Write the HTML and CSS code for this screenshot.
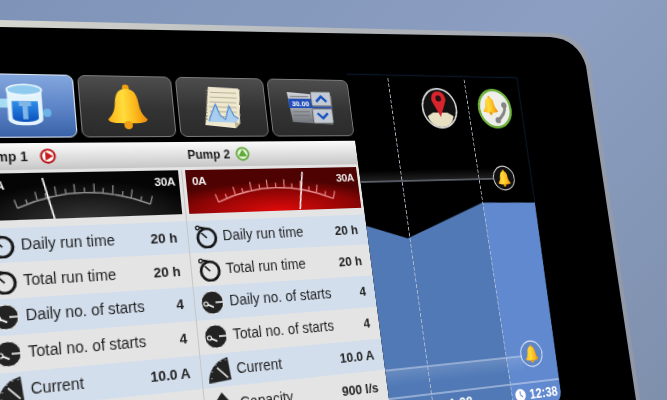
FILE: index.html
```html
<!doctype html>
<html lang="en">

<head>
    <meta charset="UTF-8">
    <title>Pump overview</title>
    <link rel="stylesheet" href="styles.css">
</head>

<body>
    <svg class="defs" width="0" height="0">
        <defs>
            <linearGradient id="gBell" x1="0" y1="0" x2="1" y2="0">
                <stop offset="0" stop-color="#ffb214" />
                <stop offset=".4" stop-color="#ffdc3c" />
                <stop offset=".7" stop-color="#fdb81c" />
                <stop offset="1" stop-color="#ea8a0c" />
            </linearGradient>
            <linearGradient id="gWater" x1="0" y1="0" x2="0" y2="1">
                <stop offset="0" stop-color="#2f8eea" />
                <stop offset="1" stop-color="#0a4fbc" />
            </linearGradient>
            <linearGradient id="gPanel" x1="0" y1="0" x2="0" y2="1">
                <stop offset="0" stop-color="#d0d4da" />
                <stop offset=".6" stop-color="#989ca2" />
                <stop offset="1" stop-color="#6c6f74" />
            </linearGradient>
            <symbol id="bell" viewBox="0 0 48 56">
                <circle cx="24" cy="5" r="4" fill="#f0a012" />
                <path fill="url(#gBell)" d="M24 6C14 6 11 14 10 24C9 34 6 38 1 43C1 47 8 48 24 48C40 48 47 47 47 43C42 38 39 34 38 24C37 14 34 6 24 6Z" />
                <circle cx="24" cy="50" r="5" fill="#f0a012" />
            </symbol>
            <symbol id="watch" viewBox="0 0 24 24">
                <circle cx="13" cy="14" r="9" fill="none" stroke="#161616" stroke-width="2.7" />
                <circle cx="4.500" cy="4" r="1.800" fill="none" stroke="#161616" stroke-width="1.300" />
                <path d="M6.500 3.500L12 4.800" fill="none" stroke="#161616" stroke-width="2" />
                <path d="M8 9L13 14" fill="none" stroke="#161616" stroke-width="1.500" />
            </symbol>
            <symbol id="starts" viewBox="0 0 24 24">
                <circle cx="12" cy="12" r="11" fill="#222" stroke="#f2f2f2" />
                <path d="M6 13L13 16.500M15 12H23" fill="none" stroke="#f2f2f2" stroke-width="1.600" />
                <circle cx="5.500" cy="13" r="2" fill="#222" stroke="#f2f2f2" stroke-width="1.200" />
            </symbol>
            <symbol id="current" viewBox="0 0 24 24">
                <path d="M23 21L1 23C1 12 8 3 21 0Z" fill="#222" />
                <path d="M10 9L20 19" stroke="#eee" stroke-width="1.500" />
                <path d="M4 19V18M5 13V12M9 7V6M14 4V3M19 3V2" stroke="#ccc" stroke-width="1" />
            </symbol>
            <symbol id="capacity" viewBox="0 0 24 24">
                <path d="M12 1L20 11H15V17H9V11H4Z" fill="#222" />
                <path d="M3 20H21M5 23H19" stroke="#222" stroke-width="2" />
            </symbol>
            <symbol id="dial" viewBox="0 0 186 42">
                <g transform="translate(16 2) scale(.83 1)">
                    <path fill="none" stroke="currentColor" stroke-width="1.500" d="M18 30Q93 4 168 30M18 30L15 22M29 26.500L27.500 22M40 23.500L38 15M50 21.300L49 16.500M61 19.400L60 10.500M72 18L71.500 13M82 17.300L81.700 8.500M93 17V12M104 17.300L104.300 8.500M114 18L114.500 13M125 19.400L126 10.500M136 21.300L137 16.500M146 23.500L148 15M157 26.500L158.500 22M168 30L171 22" />
                </g>
            </symbol>
        </defs>
    </svg>

    <div class="stage">
        <svg class="shell" viewBox="0 0 667 400">
            <defs>
                <linearGradient id="gEdge" x1="0" y1="0" x2="1" y2="0">
                    <stop offset="0" stop-color="#d6d6cf" />
                    <stop offset=".7" stop-color="#a9aeb6" />
                    <stop offset="1" stop-color="#9097a6" />
                </linearGradient>
            </defs>
            <path fill="url(#gEdge)" d="M-2 20L552 33Q582 35 590 64L640 400H-2Z" />
            <path fill="#000" d="M-2 27L550 37Q578 39 586 66L636 400H-2Z" />
        </svg>

        <div class="screen">
            <div class="main">
                <div class="toolbar">
                    <div class="tool tool-on">
                        <svg class="tool-icon tool-icon-tank" viewBox="0 0 64 56">
                            <rect x="0" y="19" width="14" height="11" rx="3" fill="#a6ddf2" />
                            <circle cx="56" cy="36" r="5" fill="#6cb4e8" />
                            <path d="M11 8V44C11 54 51 54 51 44V8Z" fill="#e4f4fc" />
                            <path d="M16 22V42C16 49 46 49 46 42V22Z" fill="url(#gWater)" />
                            <path d="M24 22H38V28H34V44H28V28H24Z" fill="#7fb6e6" />
                            <ellipse cx="31" cy="8" rx="20" ry="6.500" fill="#8fcbee" stroke="#eef9ff" stroke-width="2" />
                        </svg>
                    </div>
                    <div class="tool">
                        <svg class="tool-icon" viewBox="0 0 48 56"><use href="#bell" /></svg>
                    </div>
                    <div class="tool">
                        <svg class="tool-icon" viewBox="0 0 56 56">
                            <path d="M12 2L52 4L48 48L42 54L4 50Z" fill="#efe8cf" />
                            <path d="M14 9L47 10M13 15L47 16M12 21L46 22M11 27L46 28M11 33L45 34M10 39L44 40" stroke="#a8a28e" stroke-width="1" />
                            <path d="M10 6L6 46" stroke="#77715f" stroke-width="2" stroke-dasharray="1.500 2.500" />
                            <path d="M9 46L13 36L19 22L24 38L30 44L36 24L41 38L46 42L44 47Z" fill="#a9cdee" />
                            <path d="M9 45L13 36L19 24L24 38L30 43L36 26L41 38L47 42" fill="none" stroke="#4a86cf" stroke-width="1.400" />
                            <path d="M42 54L48 48L41 46Z" fill="#bdb592" />
                        </svg>
                    </div>
                    <div class="tool">
                        <svg class="tool-icon tool-icon-wide" viewBox="0 0 70 50">
                            <path d="M2 3L66 8L64 48L6 44Z" fill="url(#gPanel)" />
                            <rect x="3" y="12" width="34" height="13" fill="#2350b8" />
                            <text x="20" y="23" class="setpoint">30.00</text>
                            <path d="M6 9H32M8 30H32M8 35H32" stroke="#666" />
                            <path d="M36 24H66" stroke="#1b49b0" stroke-width="2" />
                            <rect x="36" y="2" width="29" height="20" rx="2" fill="#c4cad3" stroke="#444" />
                            <rect x="36" y="26" width="29" height="20" rx="2" fill="#c4cad3" stroke="#444" />
                            <path d="M43 16L50.500 9L58 16M43 32L50.500 39L58 32" fill="none" stroke="#1450c0" stroke-width="3.400" />
                        </svg>
                    </div>
                </div>

                <div class="table">
                    <section class="pump pump-first">
                        <header class="pump-head">
                            <span>Pump 1</span>
                            <svg class="state" viewBox="0 0 16 16">
                                <circle cx="8" cy="8" r="6.600" fill="#fff" stroke="#b81414" stroke-width="2" />
                                <path d="M5.500 3.500L13 8L5.500 12.500Z" fill="#c81818" />
                            </svg>
                        </header>
                        <div class="pump-body">
                            <div class="gauge gauge-off">
                                <svg viewBox="0 0 186 42"><use href="#dial" /><path d="M55 4L64 44" stroke="#fff" stroke-width="1.600" /></svg>
                                <span class="gauge-min">0A</span><span class="gauge-max">30A</span>
                            </div>
                            <div class="row"><svg class="row-icon"><use href="#watch" /></svg><span class="label">Daily run time</span><b>20 h</b></div>
                            <div class="row"><svg class="row-icon"><use href="#watch" /></svg><span class="label">Total run time</span><b>20 h</b></div>
                            <div class="row"><svg class="row-icon"><use href="#starts" /></svg><span class="label">Daily no. of starts</span><b>4</b></div>
                            <div class="row"><svg class="row-icon"><use href="#starts" /></svg><span class="label">Total no. of starts</span><b>4</b></div>
                            <div class="row"><svg class="row-icon"><use href="#current" /></svg><span class="label">Current</span><b>10.0 A</b></div>
                            <div class="row"><svg class="row-icon"><use href="#capacity" /></svg><span class="label">Capacity</span><b>900 l/s</b></div>
                        </div>
                    </section>
                    <section class="pump">
                        <header class="pump-head">
                            <span>Pump 2</span>
                            <svg class="state" viewBox="0 0 16 16">
                                <circle cx="8" cy="8" r="6.600" fill="#e8f4dc" stroke="#62a93c" stroke-width="2" />
                                <path d="M8 3L13 11H3Z" fill="#62a93c" />
                            </svg>
                        </header>
                        <div class="pump-body">
                            <div class="gauge gauge-on">
                                <svg viewBox="0 0 186 42"><use href="#dial" /><path d="M124 3L117 42" stroke="#fff" stroke-width="1.600" /></svg>
                                <span class="gauge-min">0A</span><span class="gauge-max">30A</span>
                            </div>
                            <div class="row"><svg class="row-icon"><use href="#watch" /></svg><span class="label">Daily run time</span><b>20 h</b></div>
                            <div class="row"><svg class="row-icon"><use href="#watch" /></svg><span class="label">Total run time</span><b>20 h</b></div>
                            <div class="row"><svg class="row-icon"><use href="#starts" /></svg><span class="label">Daily no. of starts</span><b>4</b></div>
                            <div class="row"><svg class="row-icon"><use href="#starts" /></svg><span class="label">Total no. of starts</span><b>4</b></div>
                            <div class="row"><svg class="row-icon"><use href="#current" /></svg><span class="label">Current</span><b>10.0 A</b></div>
                            <div class="row"><svg class="row-icon"><use href="#capacity" /></svg><span class="label">Capacity</span><b>900 l/s</b></div>
                        </div>
                    </section>
                </div>
            </div>

            <div class="chart">
                <svg class="plot" viewBox="0 0 222 362">
                    <defs>
                        <linearGradient id="gTop" x1="0" y1="0" x2="0" y2="1">
                            <stop offset="0" stop-color="#000" />
                            <stop offset="1" stop-color="#222" />
                        </linearGradient>
                        <linearGradient id="gLow" x1="0" y1="0" x2="0" y2="1">
                            <stop offset="0" stop-color="#fff" stop-opacity=".14" />
                            <stop offset="1" stop-color="#fff" stop-opacity="0" />
                        </linearGradient>
                    </defs>
                    <path d="M0 1.500H214L211 146" fill="none" stroke="#0b1626" stroke-width="1.500" />
                    <rect x="0" y="106" width="164" height="12" fill="url(#gTop)" />
                    <path fill="#5079b6" d="M0 164L46 179L143 144V362H0Z" />
                    <path fill="#6089cf" d="M143 144L211 146L205 352Q204 362 196 362H143Z" />
                    <rect x="0" y="311" width="164" height="16" fill="url(#gLow)" />
                    <path d="M0 118H164" stroke="#9aa3b4" stroke-width="1" />
                    <path d="M0 311H164" stroke="#c9d5ea" stroke-width="1" />
                    <path d="M0 339H205" stroke="#d6e0f2" stroke-width="1.200" />
                    <path class="dash" d="M48.500 5V362M143.500 5V362" />
                </svg>
                <div class="badge badge-map">
                    <svg viewBox="0 0 44 46">
                        <ellipse cx="22" cy="23" rx="21" ry="22" fill="#111" stroke="#d8d8d8" stroke-width="2" />
                        <path d="M6 32L13 28H31L38 32C36 40 30 44 22 44C14 44 8 40 6 32Z" fill="#e7e0c2" />
                        <path d="M22 33L13.500 15A8.800 8.800 0 1 1 30.500 15Z" fill="#d8242c" />
                        <circle cx="22" cy="12" r="3.500" fill="#2a1012" />
                    </svg>
                </div>
                <div class="badge badge-alarm">
                    <svg viewBox="0 0 44 46">
                        <ellipse cx="22" cy="23" rx="20.500" ry="21.500" fill="#eeeeea" stroke="#6fb33e" stroke-width="3" />
                        <svg x="6" y="8" width="20" height="23" viewBox="0 0 48 56"><use href="#bell" /></svg>
                        <path d="M35 19C36 26 30 33 23 37" fill="none" stroke="#858585" stroke-width="3.500" />
                        <circle cx="34.500" cy="19" r="3.500" fill="#858585" />
                        <circle cx="24" cy="36.500" r="3.500" fill="#858585" />
                    </svg>
                </div>
                <div class="badge badge-bell badge-bell-top">
                    <svg viewBox="0 0 26 26">
                        <circle cx="13" cy="13" r="12" fill="#111" stroke="#ddd" />
                        <svg x="5.500" y="4" width="15" height="18" viewBox="0 0 48 56"><use href="#bell" /></svg>
                    </svg>
                </div>
                <div class="badge badge-bell badge-bell-low">
                    <svg viewBox="0 0 26 26">
                        <circle cx="13" cy="13" r="12" fill="#5f86c8" stroke="#e4ebf6" />
                        <svg x="5.500" y="4" width="15" height="18" viewBox="0 0 48 56"><use href="#bell" /></svg>
                    </svg>
                </div>
                <div class="axis">
                    <span>1:38</span>
                    <span class="clock">
                        <svg viewBox="0 0 14 14">
                            <circle cx="7" cy="7" r="6.500" fill="#fff" />
                            <path d="M7 3V7L10 9" fill="none" stroke="#5f86c8" stroke-width="1.200" />
                        </svg>12:38
                    </span>
                </div>
            </div>
        </div>
    </div>
</body>

</html>
```

FILE: styles.css
```css
* {
    margin: 0;
    padding: 0;
    box-sizing: border-box;
}

body {
    font-family: "Liberation Sans", Arial, sans-serif;
    color: #222;
}

.defs {
    display: block;
    height: 0;
}

.stage {
    position: relative;
    width: 667px;
    height: 400px;
    overflow: hidden;
    background: linear-gradient(135deg, #7f93b8 0%, #8c9fc2 55%, #7f90ad 100%);
}

.shell {
    position: absolute;
    left: 0;
    top: 0;
    width: 667px;
    height: 400px;
}

/* flat tablet screen, the matrix lays it into the photo */
.screen {
    position: absolute;
    left: 0;
    top: 0;
    width: 600px;
    height: 362px;
    display: flex;
    overflow: hidden;
    transform-origin: 0 0;
    transform: matrix3d(1.0714, .0496, 0, .000397, .0662, .9745, 0, -.0001818, 0, 0, 1, 0, 180, 140, 0, 1) translate(-190px, -72px);
}

.main {
    width: 378px;
    flex-shrink: 0;
    padding-top: 8px;
    display: flex;
    flex-direction: column;
    gap: 5px;
}

.toolbar {
    display: flex;
    gap: 4px;
    height: 61px;
}

.tool {
    flex: 1;
    display: flex;
    align-items: center;
    justify-content: center;
    border: 1px solid #7d7d7d;
    border-radius: 7px;
    background: linear-gradient(#4d4d4d, #333 55%, #2b2b2b);
}

.tool-on {
    border-color: #dfe8f6;
    background: linear-gradient(#83a6dd, #5e86c8 50%, #3a62a8);
}

.tool-icon {
    width: 46px;
    height: 46px;
}

.tool-icon-tank {
    width: 50px;
    height: 44px;
    margin-left: 3px;
}

.tool-icon-wide {
    width: 54px;
    height: 40px;
    margin-left: 2px;
}

.setpoint {
    font-size: 10px;
    font-weight: bold;
    fill: #fff;
    text-anchor: middle;
}

.table {
    flex: 1;
    display: grid;
    grid-template-columns: 1fr 1fr;
    background: #e4e4e4;
}

.pump-head {
    height: 25px;
    padding-left: 7px;
    display: flex;
    align-items: center;
    gap: 6px;
    font-size: 12px;
    font-weight: bold;
    color: #1c1c1c;
    background: linear-gradient(#fbfbfb, #dcdcdc 60%, #c6c6c6);
}

.pump-first .pump-head {
    padding-left: 2px;
    gap: 11px;
}

.state {
    width: 15px;
    height: 15px;
}

.pump-body {
    height: 100%;
}

.pump-first .pump-body {
    border-right: 1px solid #c6c6c6;
}

.gauge {
    position: relative;
    height: 43px;
    margin: 3px 3px 6.5px 3px;
    color: #8c8c8c;
}

.gauge svg {
    display: block;
    width: 100%;
    height: 100%;
}

.gauge-off {
    background: radial-gradient(ellipse 60% 90% at 50% 110%, #3a3a3a, #050505 100%);
}

.gauge-on {
    color: #e58c8c;
    background: radial-gradient(ellipse 70% 70% at 50% 100%, #e00a0a, #8a0505 70%, #4e0202 100%);
}

.gauge-min,
.gauge-max {
    position: absolute;
    top: 5px;
    font-size: 11.5px;
    font-weight: bold;
    letter-spacing: -.3px;
    color: #eee;
}

.gauge-min {
    left: 6px;
}

.gauge-max {
    right: 4px;
}

.row {
    height: 31.8px;
    padding: 0 10px 0 5px;
    display: flex;
    align-items: center;
    gap: 5px;
    font-size: 13.8px;
}

.row:nth-of-type(even) {
    background: #d3deed;
}

.row-icon {
    width: 24px;
    height: 24px;
    flex-shrink: 0;
}

.label {
    flex: 1;
}

.row b {
    font-size: 13px;
}

.chart {
    position: relative;
    flex: 1;
    display: flex;
    flex-direction: column;
    justify-content: flex-end;
}

.plot {
    position: absolute;
    left: 0;
    top: 0;
    width: 100%;
    height: 100%;
}

.dash {
    fill: none;
    stroke: #b5bfd0;
    stroke-width: 1;
    stroke-dasharray: 4 2;
}

.badge {
    position: absolute;
}

.badge svg {
    display: block;
}

.badge-map,
.badge-alarm {
    top: 15px;
    width: 44px;
    height: 46px;
}

.badge-map {
    left: 85px;
}

.badge-alarm {
    left: 156px;
}

.badge-bell {
    left: 161px;
    width: 29px;
    height: 29px;
}

.badge-bell-top {
    top: 103px;
}

.badge-bell-low {
    top: 295px;
}

.axis {
    position: relative;
    height: 23px;
    padding-right: 21px;
    display: flex;
    justify-content: flex-end;
    align-items: center;
    gap: 52px;
    font-size: 14px;
    font-weight: bold;
    color: #fff;
}

.clock {
    display: flex;
    align-items: center;
    gap: 4px;
}

.clock svg {
    width: 14px;
    height: 14px;
}
```
